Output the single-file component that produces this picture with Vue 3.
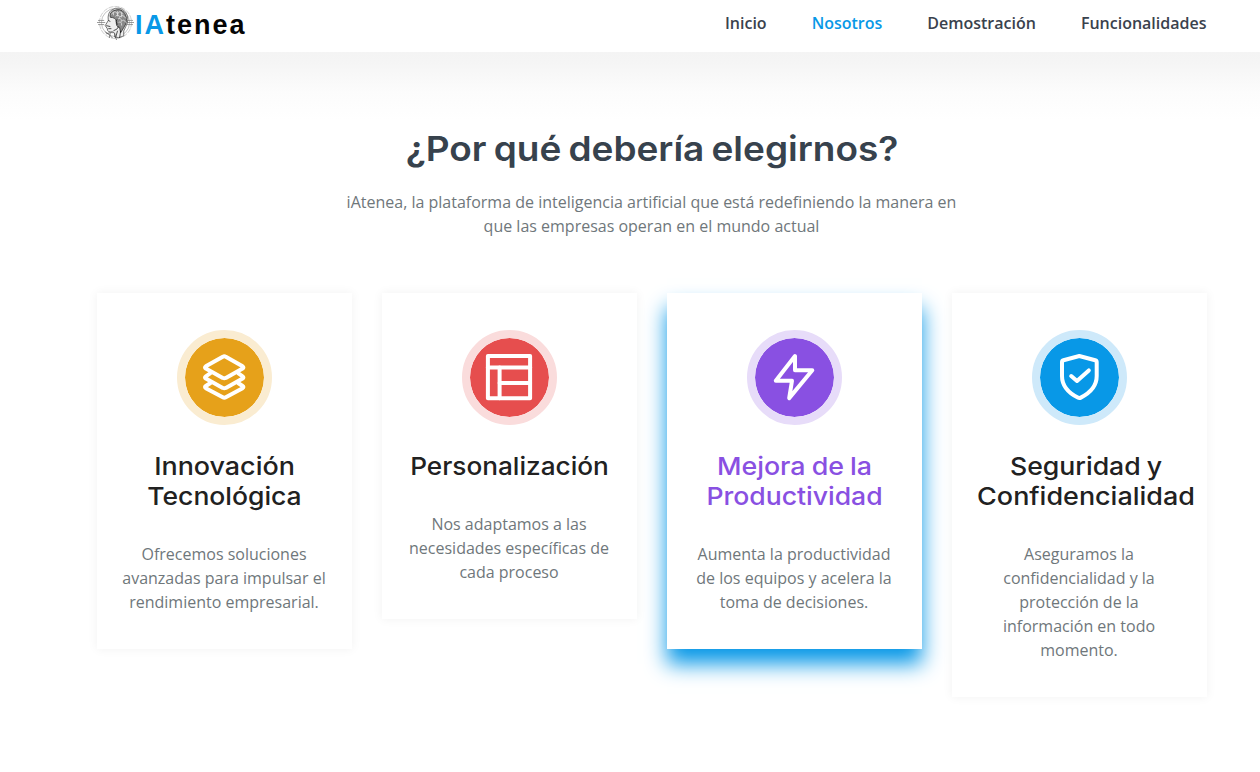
<script setup>
const links = [
  { label: 'Inicio', active: false },
  { label: 'Nosotros', active: true },
  { label: 'Demostración', active: false },
  { label: 'Funcionalidades', active: false },
]

const cards = [
  {
    kind: 'amber',
    title: [{ text: 'Innovación', cls: 't-inn' }, { text: 'Tecnológica', cls: 't-tec' }],
    body: ['Ofrecemos soluciones', 'avanzadas para impulsar el', 'rendimiento empresarial.'],
    paths: [
      'M45.8 26.8Q47.3 25.8 48.8 26.8L65.6 36.3Q67.2 37.4 65.6 38.5L48.8 47.9Q47.3 48.8 45.8 47.9L28.8 38.5Q27.2 37.4 28.8 36.3Z',
      'M33.5 43.2L28.8 46.3Q27.2 47.4 28.8 48.5L45.8 57.9Q47.3 58.8 48.8 57.9L65.6 48.5Q67.2 47.4 65.6 46.3L61.1 43.2',
      'M33.5 53L28.8 56Q27.2 57.1 28.8 58.2L45.8 67.2Q47.3 68.1 48.8 67.2L65.6 58.2Q67.2 57.1 65.6 56L61.1 53',
    ],
  },
  {
    kind: 'red',
    title: [{ text: 'Personalización', cls: 't-per' }],
    body: ['Nos adaptamos a las', 'necesidades específicas de', 'cada proceso'],
    paths: ['M25.9 26H68.1V68.3H25.9Z', 'M25.9 37.6H68.1', 'M37.6 37.6V68.3', 'M37.6 53H68.1'],
  },
  {
    kind: 'violet',
    title: [{ text: 'Mejora de la', cls: 't-mej' }, { text: 'Productividad', cls: 't-pro' }],
    body: ['Aumenta la productividad', 'de los equipos y acelera la', 'toma de decisiones.'],
    paths: ['M48 26V40.3H65.3L42.2 68.1L45 50.7H28.8Z'],
  },
  {
    kind: 'blue',
    title: [{ text: 'Seguridad y', cls: 't-seg' }, { text: 'Confidencialidad', cls: 't-con' }],
    body: ['Aseguramos la', 'confidencialidad y la', 'protección de la', 'información en todo', 'momento.'],
    paths: [
      'M47.3 26L63.2 30.2Q64.7 30.6 64.7 32V46Q64.7 59.5 48.8 67.6Q47.3 68.4 45.8 67.6Q30 59.5 30 46V32Q30 30.6 31.5 30.2Z',
      'M39.2 46L45 51L56.8 40.4',
    ],
  },
]
</script>

<template>
  <div class="page">
    <header class="header">
      <a class="logo">
        <svg class="emblem" viewBox="0 0 36 36" fill="none" stroke="#333" stroke-width=".7">
          <circle cx="18" cy="18" r="15.6" stroke="#bbb" stroke-dasharray="5 1" />
          <circle cx="18" cy="18" r="13.7" stroke="#aaa" />
          <path d="M0 18H8M1 16H7M1 20H7M28 18H36M29 16H35M29 20H35" stroke="#777" />
          <path d="M14 6Q22 1 28 8Q32 15 28 22Q25 26 26 31Q21 34 17 32Q18 28 15 27Q10 28 10 24L8 21L11 16Q10 9 14 6Z" fill="#eee" stroke="#444" />
          <path d="M15 7Q23 3 27 9Q31 16 26 23L23 28L22 23Q18 22 19 17Q18 13 13 13Q12 9 15 7Z" fill="#888" stroke="#222" />
          <path d="M14 10Q18 5 20 10Q22 5 25 10M18 12Q21 9 22 13Q25 9 28 14M20 15Q23 12 24 17Q26 14 28 18M21 18Q24 16 24 21M16 8V11M20 7V12M24 8V13" stroke="#eee" />
          <path d="M20 20Q17 16 20 15M11 16L13 17M9 21L13 22M11 24H14M16 26Q20 25 21 22M20 26L18 33M23 26L22 33" stroke="#111" />
          <path d="M9 29Q14 27 16 28M8 27Q12 29 15 33M13 28L12 33M17 28L19 35" stroke="#555" />
        </svg>
        <span class="wordmark"><span class="accent">IA</span>tenea</span>
      </a>
      <nav class="nav">
        <a v-for="l in links" :key="l.label" :class="{ active: l.active }">{{ l.label }}</a>
      </nav>
    </header>

    <main class="section">
      <div class="intro">
        <h2>¿Por qué debería elegirnos?</h2>
        <p>iAtenea, la plataforma de inteligencia artificial que está redefiniendo la manera en<br />que las empresas operan en el mundo actual</p>
      </div>
      <div class="cards">
        <article v-for="c in cards" :key="c.kind" class="card" :class="c.kind">
          <div class="icon">
            <svg viewBox="0 0 95 95"><path v-for="d in c.paths" :key="d" :d="d" /></svg>
          </div>
          <h3><span v-for="t in c.title" :key="t.text" class="line" :class="t.cls">{{ t.text }}</span></h3>
          <p><span v-for="b in c.body" :key="b" class="line">{{ b }}</span></p>
        </article>
      </div>
    </main>
  </div>
</template>

<style>
body { background: #fff; overflow: hidden; }
</style>

<style scoped>
.page { height: 772px; overflow: hidden; font: 16px/24px "Open Sans", "Noto Sans", sans-serif; color: #6f777b; }
.header { box-sizing: border-box; height: 52px; padding: 0 53.5px 0 97px; display: flex; justify-content: space-between; align-items: flex-start; background: #fff; }
.logo { display: flex; align-items: flex-start; }
.emblem { width: 37px; height: 37px; margin-top: 4px; }
.wordmark { font: bold 27px/30px "Liberation Sans", Arial, sans-serif; letter-spacing: 2px; color: #050505; margin: 10px 0 0 1px; }
.accent { color: #0898e7; }
.nav { display: flex; gap: 45px; padding-top: 11px; font-weight: 600; color: #3a424d; }
.nav .active { color: #0898e7; }
.section { height: 720px; background: linear-gradient(#f4f4f4 0, #f5f5f5 10px, #fcfcfc 40px, #fff 68px); }
.intro { padding: 75px 0 0 96.5px; width: 1110px; text-align: center; }
h2 { margin: 0; font: 600 34.5px/44px Inter, sans-serif; color: #37424d; white-space: nowrap; word-spacing: -2px; transform: scaleX(1.072); }
.intro p { margin: 19px 0 0; }
.cards { display: flex; align-items: flex-start; gap: 30px; margin: 55px 0 0 96.5px; }
.card { box-sizing: border-box; width: 255px; padding: 37px 25px 35px; background: #fff; box-shadow: 0 0 10px rgba(0, 0, 0, .06); text-align: center; }
.card.violet { box-shadow: 0 15px 20px #0898e7; }
.icon { width: 95px; height: 95px; box-sizing: border-box; margin: 0 auto; border-radius: 50%; border: 8px solid; background-clip: padding-box; }
.icon svg { display: block; width: 95px; height: 95px; margin: -8px; fill: none; stroke: #fff; stroke-width: 4; stroke-linecap: round; stroke-linejoin: round; }
.amber .icon { background-color: #e6a11a; border-color: #faecd1; }
.red .icon { background-color: #e64e4e; border-color: #fadcdc; }
.violet .icon { background-color: #8950e2; border-color: #e7dcf9; }
.blue .icon { background-color: #0898e7; border-color: #cee9fa; }
h3 { display: inline-block; width: 205px; margin: 26px 0 0; vertical-align: top; font: 500 24.9px/30px Inter, sans-serif; color: #212121; }
.violet h3 { color: #8950e2; }
.blue h3 { width: 218px; }
.line { display: block; white-space: nowrap; }
.t-inn { transform: scaleX(1.08); }
.t-tec { transform: scaleX(1.064); }
.t-per { transform: scaleX(1.052); }
.t-mej { word-spacing: -1px; transform: scaleX(1.077); }
.t-pro { transform: scaleX(1.067); }
.t-seg { word-spacing: -1px; transform: scaleX(1.07); }
.t-con { transform: scaleX(1.082); }
.card p { margin: 31px 0 0; }
</style>
